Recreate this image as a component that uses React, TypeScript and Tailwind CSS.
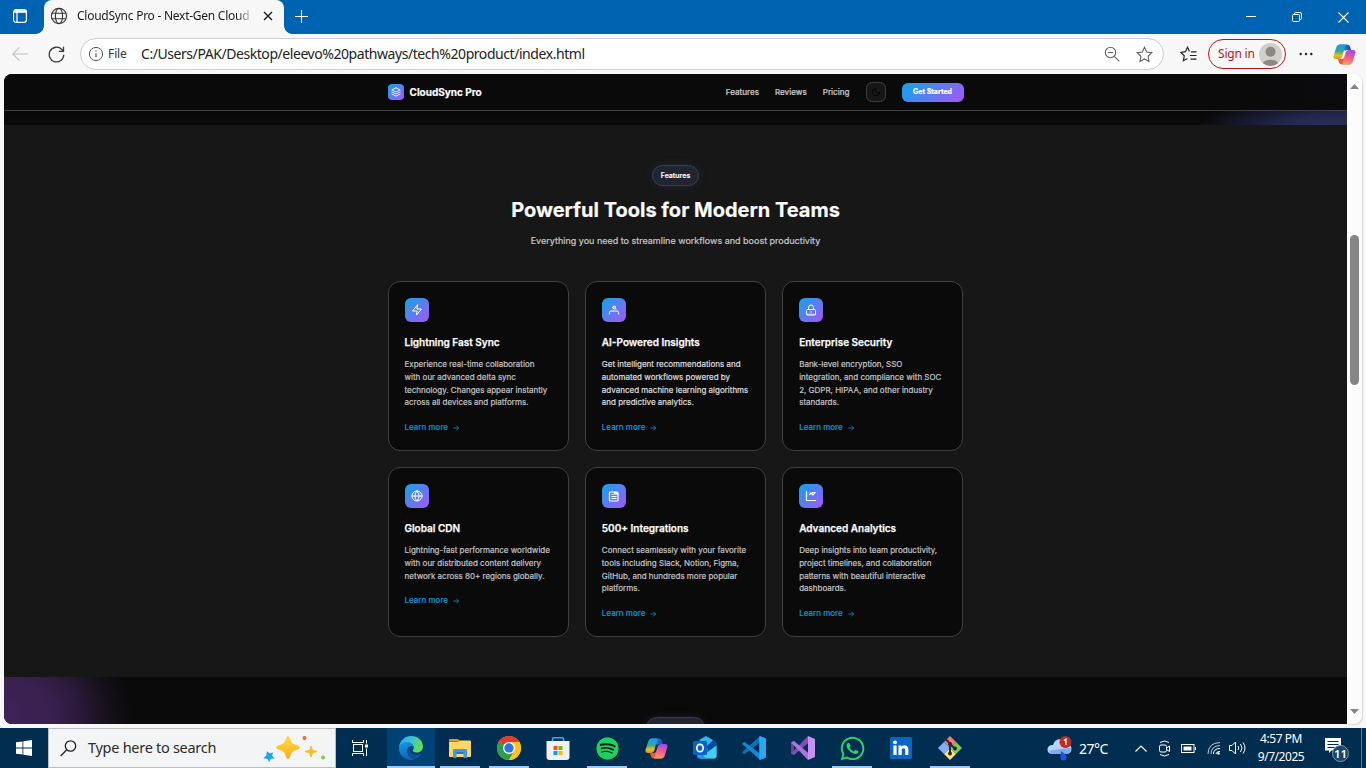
import React from "react";
import { FaWhatsapp, FaSpotify } from "react-icons/fa";

const UI = "font-['Noto_Sans','Open_Sans',sans-serif]";

/* ---------- browser chrome ---------- */

function GlobeIcon() {
  return (
    <svg width="18" height="18" viewBox="0 0 18 18" fill="none" stroke="#333" strokeWidth="1.1">
      <circle cx="9" cy="9" r="7.6" />
      <ellipse cx="9" cy="9" rx="3.6" ry="7.6" />
      <path d="M2 6.2h14M2 11.8h14" />
    </svg>
  );
}

function TitleBar() {
  return (
    <div className="flex h-[34px] shrink-0 items-end bg-[#0063b1]">
      <div className="flex h-[34px] w-9 items-center pl-3 pb-0.5">
        <svg width="16" height="16" viewBox="0 0 16 16" fill="none" stroke="#fff" strokeWidth="1.2">
          <rect x="1.6" y="1.6" width="12.8" height="12.8" rx="2.4" />
          <path d="M2 4.2h12M5 4.6v9.6" />
          <path d="M2 3.2h12" strokeWidth="2" />
        </svg>
      </div>
      <div className="h-2 w-2 bg-[radial-gradient(circle_at_0_0,transparent_7.5px,#f7f7f7_8px)]" />
      <div className="flex h-[34px] w-[240px] items-center rounded-t-lg bg-[#f7f7f7] pl-1.5 pb-0.5">
        <GlobeIcon />
        <div className={`${UI} ml-[9px] h-5 w-[177px] whitespace-nowrap bg-gradient-to-r from-[#1a1a1a] from-90% to-transparent bg-clip-text text-[12px] leading-5 tracking-[-0.260px] text-transparent`}>
          CloudSync Pro - Next-Gen Cloud
        </div>
        <svg className="ml-[9px]" width="10" height="10" viewBox="0 0 10 10" stroke="#1a1a1a" strokeWidth="1.4">
          <path d="M1 1l8 8M9 1l-8 8" />
        </svg>
      </div>
      <div className="h-2 w-2 bg-[radial-gradient(circle_at_100%_0,transparent_7.5px,#f7f7f7_8px)]" />
      <div className="flex h-[34px] items-center pl-0.5 pb-0.5">
        <svg width="15" height="15" viewBox="0 0 15 15" stroke="#fff" strokeWidth="1.1">
          <path d="M7.5 1v13M1 7.5h13" />
        </svg>
      </div>
      <div className="ml-auto flex h-[34px] items-center gap-9 pr-[17px]">
        <svg width="10" height="10" viewBox="0 0 10 10" stroke="#fff" strokeWidth="1"><path d="M0 4.5h10" /></svg>
        <svg width="10" height="10" viewBox="0 0 10 10" fill="none" stroke="#fff" strokeWidth="1">
          <rect x="0.5" y="2.5" width="7" height="7" rx="1" />
          <path d="M2.5 2.5V1.7q0-1.2 1.2-1.2h4.2q1.6 0 1.6 1.6v4.2q0 1.2-1.2 1.2h-.8" />
        </svg>
        <svg width="11" height="11" viewBox="0 0 11 11" stroke="#fff" strokeWidth="1.1"><path d="M.5.5l10 10M10.5.5l-10 10" /></svg>
      </div>
    </div>
  );
}

function CopilotIcon({ className = "" }: { className?: string }) {
  const id = React.useId();
  return (
    <svg className={className} width="23" height="21" viewBox="0 0 23 21">
      <defs>
        <linearGradient id={id + "a"} x1="0" y1="0" x2="0" y2="1">
          <stop offset="0" stopColor="#1d9bf0" /><stop offset=".45" stopColor="#35a88a" /><stop offset=".75" stopColor="#e3c21e" /><stop offset="1" stopColor="#ef8a24" />
        </linearGradient>
        <linearGradient id={id + "b"} x1=".4" y1="1" x2=".6" y2="0">
          <stop offset="0" stopColor="#a24be8" /><stop offset=".5" stopColor="#ee5b94" /><stop offset="1" stopColor="#ff9a56" />
        </linearGradient>
        <linearGradient id={id + "c"} x1="0" y1="0" x2="1" y2="0">
          <stop offset="0" stopColor="#22b4ee" /><stop offset="1" stopColor="#1b3fc0" />
        </linearGradient>
      </defs>
      <g transform="rotate(180 11.5 10.5)">
        <path d="M6 .5h8q2.500 0 3 2l1 3.500h-3q-2 0-3 1z" fill="#ec5a35" />
        <path d="M7 .5h7L10.500 12q-1 3-4 3H3Q-.2 15 .6 12L3.200 3.500Q4 .5 7 .5z" fill={`url(#${id}b)`} />
      </g>
      <path d="M6 .5h8q2.500 0 3 2l1 3.500h-3q-2 0-3 1z" fill={`url(#${id}c)`} />
      <path d="M7 .5h5.500L9.500 12q-1 3-4 3H3Q-.2 15 .6 12L3.200 3.500Q4 .5 7 .5z" fill={`url(#${id}a)`} />
    </svg>
  );
}

const STAR = "M8.5 1.3l2.2 4.7 5.1.7-3.7 3.6.9 5.2-4.5-2.500L4 15.500l.9-5.200L1.200 6.700 6.300 6z";

function Toolbar() {
  return (
    <div className="flex h-10 shrink-0 items-center bg-[#f7f7f7]">
      <svg className="ml-3" width="16" height="16" viewBox="0 0 16 16" fill="none" stroke="#c0c0c0" strokeWidth="1.1"><path d="M16 8H.8M7.500 1.300L.8 8l6.700 6.700" /></svg>
      <svg className="ml-5" width="17" height="17" viewBox="0 0 17 17" fill="none" stroke="#3a3a3a" strokeWidth="1.3"><path d="M15.800 8.700a7.300 7.300 0 1 1-2-5.200L15.500 5.200M15.500.8v4.600h-4.600" /></svg>
      <div className="ml-[15px] flex h-8 w-[1084px] items-center rounded-full border border-[#cdcdcd] bg-white pl-[7px]">
        <svg width="16" height="16" viewBox="0 0 16 16" fill="none" stroke="#555" strokeWidth="1"><circle cx="8" cy="8" r="6.6" /><path d="M8 7.300v4M8 4.600v1.200" strokeWidth="1.2" /></svg>
        <span className={`${UI} ml-1 w-[20px] whitespace-nowrap text-[12px] tracking-[-0.100px] text-[#333]`}>File</span>
        <span className={`${UI} ml-[13px] -mt-px whitespace-nowrap text-[14px] tracking-[-0.440px] text-[#222]`}>C:/Users/PAK/Desktop/eleevo%20pathways/tech%20product/index.html</span>
        <svg className="ml-auto" width="16" height="16" viewBox="0 0 16 16" fill="none" stroke="#606060" strokeWidth="1.1"><circle cx="6.500" cy="6.500" r="5.200" /><path d="M10.300 10.300l5 5M3.800 6.500h5.400" /></svg>
        <svg className="ml-4" width="17" height="17" viewBox="0 0 17 17" fill="none" stroke="#606060" strokeWidth="1.1"><path d={STAR} /></svg>
        <span className="w-2.5" />
      </div>
      <svg className="ml-4" width="17" height="17" viewBox="0 0 17 17" fill="none" stroke="#222" strokeWidth="1.2"><path d="M9.500 5.500L7.500 1.300 5.500 5.700l-4.700.7 3.500 3.300-.9 5 4-2.200M11 5.800h5.500M9.800 9.500h6.700M10.500 13.200h6" /></svg>
      <div className="ml-[11px] flex h-[30px] w-[78px] items-center rounded-full border border-[#b5161b] pl-[9px]">
        <span className={`${UI} w-[38px] whitespace-nowrap text-[12px] tracking-[-0.200px] text-[#b5161b]`}>Sign in</span>
        <svg className="ml-[3px]" width="23" height="23" viewBox="0 0 23 23">
          <circle cx="11.500" cy="11.500" r="11.500" fill="#d2cfcb" /><circle cx="11.500" cy="8.700" r="5" fill="#8a8784" /><path d="M3.800 20a8.500 5.600 0 0 1 15.400 0 11.500 11.500 0 0 1-15.400 0z" fill="#8a8784" />
        </svg>
      </div>
      <svg className="ml-[13px]" width="14" height="4" viewBox="0 0 14 4" fill="#222"><circle cx="1.700" cy="2" r="1.200" /><circle cx="7" cy="2" r="1.200" /><circle cx="12.300" cy="2" r="1.200" /></svg>
      <CopilotIcon className="ml-5" />
    </div>
  );
}

/* ---------- web page ---------- */

const features = [
  { icon: "bolt", title: "Lightning Fast Sync", lines: ["Experience real-time collaboration", "with our advanced delta sync", "technology. Changes appear instantly", "across all devices and platforms."] },
  { icon: "person", title: "AI-Powered Insights", lines: ["Get intelligent recommendations and", "automated workflows powered by", "advanced machine learning algorithms", "and predictive analytics."], bright: true },
  { icon: "lock", title: "Enterprise Security", lines: ["Bank-level encryption, SSO", "integration, and compliance with SOC", "2, GDPR, HIPAA, and other industry", "standards."] },
  { icon: "globe", title: "Global CDN", lines: ["Lightning-fast performance worldwide", "with our distributed content delivery", "network across 80+ regions globally."] },
  { icon: "doc", title: "500+ Integrations", lines: ["Connect seamlessly with your favorite", "tools including Slack, Notion, Figma,", "GitHub, and hundreds more popular", "platforms."] },
  { icon: "chart", title: "Advanced Analytics", lines: ["Deep insights into team productivity,", "project timelines, and collaboration", "patterns with beautiful interactive", "dashboards."] },
];

function FeatureGlyph({ name }: { name: string }) {
  return (
    <svg width="12" height="12" viewBox="0 0 24 24" fill="none" stroke="#fff" strokeWidth="2" strokeLinecap="round" strokeLinejoin="round">
      {name === "bolt" && <path d="M13 2L3 14h9l-1 8 10-12h-9l1-8z" />}
      {name === "person" && <path d="M3 20v-3q0-3 3-3h12q3 0 3 3v3M15.500 5.500A4 4 0 0 0 9 6.500q0 3 3 3h4M10 6h5" />}
      {name === "lock" && (<><rect x="3" y="11" width="18" height="11" rx="2" /><path d="M7 11V7a5 5 0 0 1 10 0v4" /><circle cx="12" cy="16" r=".7" opacity=".6" /><path d="M4 20.500h16" opacity=".6" /></>)}
      {name === "globe" && (<><circle cx="12" cy="12" r="10" /><path d="M2 12h20M12 2a15.300 15.300 0 0 1 4 10 15.300 15.300 0 0 1-4 10 15.300 15.300 0 0 1-4-10 15.300 15.300 0 0 1 4-10z" /></>)}
      {name === "doc" && <path strokeWidth="2.4" d="M16 4h2a2 2 0 0 1 2 2v14a2 2 0 0 1-2 2H5a2 2 0 0 1-2-2V6a2 2 0 0 1 2-2h3M8 4h6l5 5M13 3v5h5M8 9h2M8 13h8M8 17h8" />}
      {name === "chart" && (<><path d="M3 3v18h18" strokeWidth="2.400" /><path d="M20 5l-4 5-3-3-4 2M15 5h6M10 6h5" strokeWidth="2.400" /></>)}
    </svg>
  );
}

function FeatureCard({ f }: { f: (typeof features)[number] }) {
  return (
    <article className="flex h-[170px] flex-col items-start rounded-xl border border-[#404040] bg-[#0a0a0a] p-4">
      <div className="flex size-6 items-center justify-center rounded-md bg-[linear-gradient(135deg,#0ea5e9,#a855f7)]">
        <FeatureGlyph name={f.icon} />
      </div>
      <h3 className="mt-3 whitespace-nowrap text-[10px] font-semibold leading-4 text-[#fafafa] [-webkit-text-stroke:0.25px_#fafafa]">{f.title}</h3>
      <p className={f.bright ? "mt-2 text-[8px] leading-[12.8px] text-[#e0e0e0] [-webkit-text-stroke:0.15px_#e0e0e0]" : "mt-2 text-[8px] leading-[12.8px] text-[#c4c4c4] [-webkit-text-stroke:0.2px_#c4c4c4]"}>
        {f.lines.map((l) => <span key={l} className="block whitespace-nowrap">{l}</span>)}
      </p>
      <a className={f.bright ? "mt-3 flex items-center gap-1 text-[8px] font-medium leading-[12.8px] text-[#0ea0f0]" : "mt-3 flex items-center gap-1 text-[8px] font-medium leading-[12.8px] text-[#0e95d2] [-webkit-text-stroke:0.15px_#0e95d2]"}>
        Learn more
        <svg width="8" height="8" viewBox="0 0 24 24" fill="none" stroke="currentColor" strokeWidth="2.2"><path d="M4 12h16M13 5l7 7-7 7" /></svg>
      </a>
    </article>
  );
}

function WebPage() {
  return (
    <div className="flex h-[650px] w-[1343px] flex-col overflow-hidden rounded-l-lg bg-[#0a0a0a] font-['Inter',sans-serif]">
      <header className="z-10 flex h-[37px] shrink-0 justify-center border-b border-[#404040] bg-gradient-to-r from-[#0a0a0a] from-90% to-[#0b0b0f] shadow-[0_3px_8px_rgba(0,0,0,0.25)]">
        <div className="flex w-[576px] items-center">
          <div className="flex size-4 items-center justify-center rounded bg-[linear-gradient(135deg,#0ea5e9,#a855f7)]">
            <svg width="10" height="10" viewBox="0 0 24 24" fill="none" stroke="#fff" strokeWidth="2" strokeLinejoin="round" strokeLinecap="round"><path d="M12 2L2 7l10 5 10-5-10-5zM2 12l10 5 10-5M2 17l10 5 10-5" /></svg>
          </div>
          <span className="ml-1.5 text-[10px] font-bold text-[#fafafa] [-webkit-text-stroke:0.2px_#fafafa]">CloudSync Pro</span>
          <nav className="ml-auto flex items-center gap-4 text-[8px] font-medium text-[#c8c8c8] [-webkit-text-stroke:0.2px_#c8c8c8]">
            <a>Features</a><a>Reviews</a><a>Pricing</a>
          </nav>
          <div className="ml-4 flex size-5 items-center justify-center rounded-md border border-[#404040] bg-[#171717]">
            <svg width="10" height="10" viewBox="0 0 24 24" fill="none" stroke="#000" strokeWidth="2"><path d="M21 12.800A9 9 0 1 1 11.200 3 7 7 0 0 0 21 12.800z" /></svg>
          </div>
          <button className="ml-4 h-[19px] w-[62px] rounded-md bg-[linear-gradient(135deg,#0ea5e9,#a855f7)] pt-px text-[7px] font-bold text-white [-webkit-text-stroke:0.2px_#fff]">Get Started</button>
        </div>
      </header>
      <div className="h-[14px] shrink-0 bg-[radial-gradient(ellipse_150px_60px_at_100%_24px,#2b2e5c_0%,#262a52_40%,#191c34_68%,#0a0a0a_100%)]" />
      <section className="flex h-[552px] shrink-0 flex-col items-center bg-[#171717] pt-10">
        <div className="flex h-[21px] w-[47px] items-center justify-center rounded-full border border-[#404040] bg-[linear-gradient(135deg,#1c2733,#262230)] pt-px text-[7px] font-semibold text-[#fafafa] shadow-[0_0_10px_rgba(60,90,150,0.2)] [-webkit-text-stroke:0.15px_#fafafa]">Features</div>
        <h2 className="mt-2 whitespace-nowrap text-[20px] font-bold leading-8 text-[#fafafa] [-webkit-text-stroke:0.2px_#fafafa]">Powerful Tools for Modern Teams</h2>
        <p className="mt-[7px] whitespace-nowrap text-[9px] leading-4 text-[#c8c8c8] [-webkit-text-stroke:0.2px_#c8c8c8]">Everything you need to streamline workflows and boost productivity</p>
        <div className="mt-8 grid w-[576px] grid-cols-3 gap-4">
          {features.map((f) => <FeatureCard key={f.title} f={f} />)}
        </div>
      </section>
      <div className="flex h-[47px] shrink-0 justify-center overflow-hidden bg-[radial-gradient(ellipse_128px_110px_at_0_40px,#3e2358_0%,#38204e_40%,#2a1938_60%,#16111b_80%,#0a0a0a_100%)] pt-10">
        <div className="h-[21px] w-[59px] shrink-0 rounded-full border border-[#404040] bg-[linear-gradient(135deg,#1c2733,#262230)] shadow-[0_0_10px_rgba(60,90,150,0.2)]" />
      </div>
    </div>
  );
}

function ScrollBar() {
  return (
    <div className="flex h-[650px] w-[15px] flex-col items-center rounded-r-lg bg-[#fcfcfc] shadow-[1px_1px_1px_#d8d8d8]">
      <svg className="mt-[10px]" width="9" height="5" viewBox="0 0 9 5"><path d="M4.500 0L9 5H0z" fill="#858585" /></svg>
      <div className="mt-[146px] h-[150px] w-[9px] rounded-full bg-[#858585]" />
      <svg className="mt-auto mb-[10px]" width="9" height="5" viewBox="0 0 9 5"><path d="M4.500 5L9 0H0z" fill="#858585" /></svg>
    </div>
  );
}

/* ---------- taskbar ---------- */

function EdgeIcon() {
  return (
    <svg width="24" height="24" viewBox="0 0 24 24">
      <defs>
        <linearGradient id="eg1" x1="0" y1="0" x2="1" y2=".3"><stop offset="0" stopColor="#2aa5e6" /><stop offset=".5" stopColor="#35c1d8" /><stop offset="1" stopColor="#62dd58" /></linearGradient>
        <linearGradient id="eg2" x1="0" y1="0" x2=".4" y2="1"><stop offset="0" stopColor="#1b9ce2" /><stop offset="1" stopColor="#0f63b8" /></linearGradient>
      </defs>
      <path d="M0 11.500C.5 4.500 6 0 12 0c7 0 12 5 12 10.500 0 3.500-2.600 6-6 6-2.500 0-4.300-1-4.300-2 0-.6 1-1.200 1-3C14.700 9 12 6.500 8.500 6.500 4.500 6.500 1 8.500 0 11.500z" fill="url(#eg1)" />
      <path d="M0 12c0-3.500 4-6 7.500-6 4 0 7.200 2.500 7.200 5.500-1-1.600-3-2-4.400-.8-4 3-1.300 11.300 5.200 12.600Q14 24 12 24C5 24 0 18.500 0 12z" fill="url(#eg2)" />
      <path d="M10.300 10.700C6 14 8.700 22 15.500 23.300c3-.7 5.200-2.600 6.800-5 .3-.5 0-.8-.5-.5-5 2.300-12.300.3-11.500-7.100z" fill="#12509c" />
    </svg>
  );
}

function FolderIcon() {
  return (
    <svg width="22" height="19" viewBox="0 0 22 19">
      <path d="M0 1q0-1 1-1h8l2 2.500H0z" fill="#e09a0c" />
      <path d="M0 2.800h9l1.500-1.300H21q1 0 1 1V17q0 1-1 1H1q-1 0-1-1z" fill="#ffd766" />
      <path d="M4 11q0-1 1-1h12q1 0 1 1v8h-3.500v-4h-7v4H4z" fill="#3f9be0" /><path d="M7.500 13h7v2h-7z" fill="#2379c0" />
    </svg>
  );
}

function ChromeIcon() {
  return (
    <svg width="24" height="24" viewBox="0 0 24 24">
      <circle cx="12" cy="12" r="12" fill="#fcc31e" />
      <path d="M12 12L1.600 6A12 12 0 0 1 22.400 6z" fill="#e33b2e" />
      <path d="M12 12L1.600 6A12 12 0 0 0 12 24l5.200-9z" fill="#2c9f4b" />
      <path d="M12 12l5.200 3L12 24a12 12 0 0 0 10.400-18H12z" fill="#fcc31e" />
      <circle cx="12" cy="12" r="6" fill="#fff" /><circle cx="12" cy="12" r="4.700" fill="#2f73e0" />
    </svg>
  );
}

function StoreIcon() {
  return (
    <svg width="24" height="24" viewBox="0 0 24 24">
      <path d="M6.500 6V3q0-1.200 1.200-1.200h8.600q1.200 0 1.200 1.200v3" fill="none" stroke="#2fb1ee" strokeWidth="1.5" />
      <path d="M.5 5h23v16q0 3-3 3h-17q-3 0-3-3z" fill="#f0f0f0" />
      <path d="M7.500 10h4v4h-4z" fill="#f04f20" /><path d="M12.500 10h4v4h-4z" fill="#7db800" /><path d="M7.500 15h4v4h-4z" fill="#00a2ed" /><path d="M12.500 15h4v4h-4z" fill="#fdb900" />
    </svg>
  );
}

function OutlookIcon() {
  return (
    <svg width="24" height="24" viewBox="0 0 24 24">
      <path d="M4 7l9-6.500L23.500 7v13q0 2.500-2.500 2.500H7Q4 22.500 4 19z" fill="#1b75cf" />
      <path d="M6 4l7-4 7 4-6 6z" fill="#30b5ee" /><path d="M14 10l7-6 2.500 3v4l-8 5z" fill="#0a4aa0" />
      <path d="M23.500 9.500V20q0 2.500-2.500 2.500H7L16 15z" fill="#3dd2f5" /><path d="M5 17l9 5.500H7q-3 0-3-3z" fill="#1c9ce8" />
      <rect x="0" y="5" width="14" height="14" rx="1.500" fill="#0c62c4" /><ellipse cx="7" cy="12" rx="3.200" ry="3.700" fill="none" stroke="#fff" strokeWidth="1.7" />
    </svg>
  );
}

function VSCodeIcon() {
  return (
    <svg width="24" height="24" viewBox="0 0 24 24">
      <path d="M.6 15.800L17.800.3 18 6.500 2.500 18 .6 17.300Q0 16.700.6 15.800z" fill="#0b72b8" />
      <path d="M.6 8.200Q0 7.500.6 6.900L2.400 6 18 17.500v6.200z" fill="#1288d6" />
      <path d="M18 0l6 2.500v19L18 24l-.8-.5V.5z" fill="#29a9f2" />
    </svg>
  );
}

function VisualStudioIcon() {
  return (
    <svg width="24" height="24" viewBox="0 0 24 24">
      <path d="M0 6.500L3 5v14l-3-1.500z" fill="#6b4396" /><path d="M0 17.500L17 0l1 6.500L3 19z" fill="#7d50ae" />
      <path d="M0 6.500L3 5l15 12.500-1 6.500z" fill="#a974dc" /><path d="M17 0l7 3v18l-7 3z" fill="#c592f3" />
    </svg>
  );
}

function LinkedInIcon() {
  return (
    <svg width="22" height="22" viewBox="0 0 22 22">
      <rect width="22" height="22" rx="1.500" fill="#0a66c2" />
      <circle cx="5" cy="5.300" r="1.900" fill="#fff" /><path d="M3.400 8.500h3.200V18H3.400zM8.500 8.500h3v1.300c1.600-2.500 6.900-2 6.900 2.700V18h-3.200v-4.800c0-2.700-3.500-2.500-3.500 0V18H8.500z" fill="#fff" />
    </svg>
  );
}

function GitIcon() {
  return (
    <svg width="24" height="24" viewBox="0 0 24 24">
      <path d="M12 0l6 6-6 6-6-6z" fill="#f47b78" /><path d="M18 6l6 6-6 6-6-6z" fill="#7fca55" /><path d="M6 6l6 6-6 6-6-6z" fill="#82aefc" /><path d="M12 12l6 6-6 6-6-6z" fill="#ffe07c" />
      <path d="M8 3.500l4 4V17M12 8l5 4.500" fill="none" stroke="#252b36" strokeWidth="2" /><circle cx="12" cy="8" r="2" fill="#252b36" /><circle cx="17" cy="12.500" r="2" fill="#252b36" /><circle cx="12" cy="17.500" r="2" fill="#252b36" />
    </svg>
  );
}

const apps: { name: string; icon: React.ReactNode; state?: "active" | "open" }[] = [
  { name: "edge", icon: <EdgeIcon />, state: "active" },
  { name: "files", icon: <FolderIcon />, state: "open" },
  { name: "chrome", icon: <ChromeIcon />, state: "open" },
  { name: "store", icon: <StoreIcon /> },
  { name: "spotify", icon: <FaSpotify size={23} color="#1ed05d" className="rounded-full bg-[#06251a]" />, state: "open" },
  { name: "copilot", icon: <CopilotIcon /> },
  { name: "outlook", icon: <OutlookIcon /> },
  { name: "vscode", icon: <VSCodeIcon /> },
  { name: "vs", icon: <VisualStudioIcon /> },
  { name: "whatsapp", icon: <FaWhatsapp size={27} color="#25d366" />, state: "open" },
  { name: "linkedin", icon: <LinkedInIcon /> },
  { name: "git", icon: <GitIcon />, state: "open" },
];

function Taskbar() {
  return (
    <div className={`${UI} flex h-10 shrink-0 items-center bg-[#002d50] text-white`}>
      <div className="flex w-12 justify-center">
        <svg width="16" height="16" viewBox="0 0 16 16" fill="#fff"><path d="M0 2.300l6.500-.9v6.200H0zM7.300 1.300L16 0v7.600H7.300zM0 8.400h6.500v6.200L0 13.700zM7.300 8.400H16V16l-8.700-1.300z" /></svg>
      </div>
      <div className="flex h-10 w-72 items-center border border-[#bcbcbc] bg-[#f3f4f6] pl-[11px] text-[#2b2b2b]">
        <svg width="17" height="17" viewBox="0 0 17 17" fill="none" stroke="#222" strokeWidth="1.3"><circle cx="10.500" cy="6" r="5.200" /><path d="M6.800 9.700L.6 16" /></svg>
        <span className="ml-[11px] whitespace-nowrap text-[14.5px] tracking-[-0.280px]">Type here to search</span>
        <svg className="ml-auto mr-2" width="64" height="28" viewBox="0 0 64 28">
          <defs><linearGradient id="sp" x1="0" y1="0" x2="0" y2="1"><stop offset="0" stopColor="#ffdc45" /><stop offset="1" stopColor="#f8ae1a" /></linearGradient></defs>
          <path d="M25 2q1.500 0 2.500 4 1 3.500 4.500 4.500 5 1.500 5 3t-5 3q-3.500 1-4.500 4.500-1 4-2.500 4t-2.500-4q-1-3.500-4.500-4.500-5-1.500-5-3t5-3q3.500-1 4.500-4.500 1-4 2.500-4z" fill="url(#sp)" />
          <path d="M48 12q1 3.500 1.500 4 .5.5 4.500 1.500-4 1-4.500 1.500T48 23q-1-3.500-1.500-4t-4.500-1.500q4-1 4.500-1.500T48 12z" fill="#fbbd26" stroke="#fbbd26" />
          <path d="M4.500 18.500l2 1.700 2.500-.7-.8 2.300 1.800 2-2.600.3-1.300 2.400-1.200-2.300-2.900-.4 2-1.800z" fill="#15a8ee" stroke="#15a8ee" strokeWidth="1.5" />
          <circle cx="41.500" cy="4" r="2" fill="#f06a2c" /><circle cx="60" cy="23.500" r="2" fill="#8fc83c" />
        </svg>
      </div>
      <div className="flex w-12 justify-center">
        <svg width="17" height="16" viewBox="0 0 17 16" fill="none" stroke="#fff" strokeWidth="1"><rect x="1.500" y="4.500" width="9" height="7" /><path d="M.5 0v2.500h11V0M.5 16v-2.500h11V16M14.500 0v3.500M14.500 8.500V16" /><path d="M13 4.500h3v3h-3z" fill="#fff" stroke="none" /></svg>
      </div>
      <div className="ml-[3px] flex h-10 gap-px">
        {apps.map((a) => (
          <div key={a.name} className={a.state === "active" ? "flex h-10 w-12 flex-col items-center bg-[#004274]" : "flex h-10 w-12 flex-col items-center"}>
            <div className="flex h-[38px] items-center pt-0.5">{a.icon}</div>
            {a.state && <div className={a.state === "active" ? "h-0.5 w-12 bg-[#9acbf3]" : "h-0.5 w-10 bg-[#9acbf3]"} />}
          </div>
        ))}
      </div>
      <div className="ml-auto flex h-10 items-center">
        <svg width="26" height="26" viewBox="0 0 26 26">
          <path d="M6 19q-5.500 0-5.500-4.500T6 10q1.500-6 7.500-6 5.500 0 6.500 5 4.500.5 4.500 5t-5 5z" fill="#b7d2fb" /><path d="M2 16q8-2 22-3-.5 6-5 6H6q-3 0-4-3z" fill="#7faaf2" />
          <path d="M14 16q5.500 3.500 5.500 6.500a3 3 0 0 1-6 0z" fill="#1557e6" />
          <circle cx="18.500" cy="7" r="6" fill="#c42b1c" /><path d="M17 5.500l2-1.500v6" fill="none" stroke="#fff" strokeWidth="1.2" />
        </svg>
        <span className="ml-1.5 w-[30px] whitespace-nowrap text-[14px] tracking-[-0.500px]">27°C</span>
        <svg className="ml-[26px]" width="12" height="7" viewBox="0 0 12 7" fill="none" stroke="#fff" strokeWidth="1.2"><path d="M.5 6.500L6 1l5.500 5.500" /></svg>
        <svg className="ml-[11px]" width="13" height="17" viewBox="0 0 13 17" fill="none" stroke="#fff"><rect x="1.500" y="5" width="7" height="7" rx="1.500" /><path d="M8.500 8l3-2v5.500l-3-2M2 2.500q4.500-3 9 0M2 14.500q4.500 3 9 0" /></svg>
        <svg className="ml-[10px]" width="15" height="9" viewBox="0 0 15 9" fill="none" stroke="#fff"><rect x=".5" y=".5" width="12.500" height="8" /><path d="M14.500 3v3" /><path d="M2.500 2.500h8v4h-8z" fill="#fff" stroke="none" /></svg>
        <svg className="ml-[11px]" width="14" height="14" viewBox="0 0 14 14" fill="none" stroke="#fff"><path d="M1 13Q1 2 13 1.500M4 13Q4 5 13 4.500" opacity=".75" /><path d="M6.500 13q0-5.500 6.500-5.500M9 13q0-2.500 4-2.500" /><circle cx="11.500" cy="12.500" r="1.200" fill="#fff" stroke="none" /></svg>
        <svg className="ml-2" width="17" height="14" viewBox="0 0 17 14" fill="none" stroke="#fff"><path d="M.5 4.500h2.500l3.500-3.500v12L3 9.500H.5zM9 5q1.500 2 0 4M11.500 3q3 4 0 8M14 1.500q4 5.500 0 11" /></svg>
        <div className="ml-[7px] flex w-[56px] flex-col items-center whitespace-nowrap text-[12px] leading-[18px] tracking-[-0.450px]"><span>4:57 PM</span><span>9/7/2025</span></div>
        <svg className="ml-4 mt-1" width="26" height="26" viewBox="0 0 26 26">
          <path d="M0 1h16v12.500H6.500L4 16V13.500H0z" fill="#fff" /><path d="M2.500 4.500h11M2.500 7.500h11M2.500 10.500h7" stroke="#002d50" />
          <circle cx="15.500" cy="16.500" r="8" fill="#17466c" stroke="#7e9bb2" /><text x="15.500" y="21" textAnchor="middle" fontSize="11.500" fontWeight="600" fill="#fff" fontFamily="Noto Sans">11</text>
        </svg>
        <div className="ml-2.5 h-10 w-px bg-[#5d7a92]" />
        <div className="w-1" />
      </div>
    </div>
  );
}

export default function App() {
  return (
    <div className="flex h-[768px] w-[1366px] flex-col overflow-hidden bg-[#f7f7f7]">
      <TitleBar />
      <Toolbar />
      <div className="flex h-[654px] shrink-0 pl-1">
        <WebPage />
        <ScrollBar />
      </div>
      <Taskbar />
    </div>
  );
}
